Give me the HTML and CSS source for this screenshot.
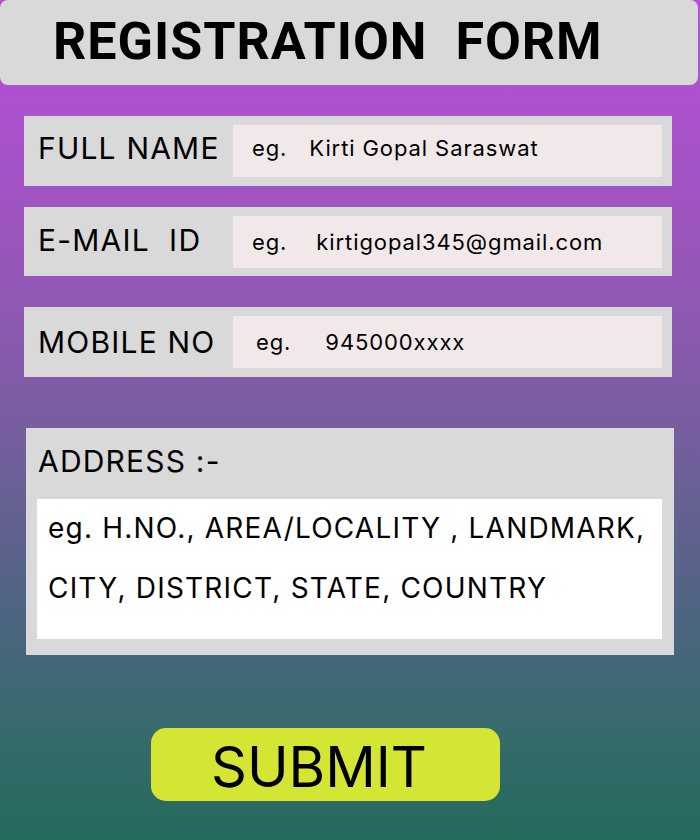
FILE: index.html
```html
<!DOCTYPE html>
<html lang="en">
<head>
<meta charset="utf-8">
<title>Registration Form</title>
<link rel="stylesheet" href="styles.css">
</head>
<body>
<div class="page">
  <header class="header">
    <h1 class="title">REGISTRATION&nbsp; FORM</h1>
  </header>
  <form class="form">
    <div class="row row-name">
      <label class="label">FULL NAME</label>
      <div class="input"><span class="eg">eg.</span><span class="val val-name">Kirti Gopal Saraswat</span></div>
    </div>
    <div class="row row-email">
      <label class="label">E-MAIL&nbsp; ID</label>
      <div class="input"><span class="eg">eg.</span><span class="val val-email">kirtigopal345@gmail.com</span></div>
    </div>
    <div class="row row-mobile">
      <label class="label">MOBILE NO</label>
      <div class="input input-mobile"><span class="eg">eg.</span><span class="val val-mobile">945000xxxx</span></div>
    </div>
    <div class="address">
      <div class="label address-label">ADDRESS :-</div>
      <div class="textarea">
        <p class="line">eg. H.NO., AREA/LOCALITY , LANDMARK,</p>
        <p class="line">CITY, DISTRICT, STATE, COUNTRY</p>
      </div>
    </div>
    <div class="actions">
      <button type="button" class="submit">SUBMIT</button>
    </div>
  </form>
</div>
</body>
</html>
```
FILE: styles.css
```css
html, body {
  margin: 0;
  padding: 0;
}
body {
  width: 700px;
  height: 840px;
  overflow: hidden;
  font-family: Inter, "Noto Sans", sans-serif;
  color: #000;
  background: linear-gradient(to bottom, #b251d2 0px, #b051d0 85px, #9158b5 300px, #775e9f 430px, #4c6580 620px, #396a6e 720px, #256a5c 840px);
}
.page {
  display: flex;
  flex-direction: column;
}
.header {
  height: 85px;
  width: 698px;
  background: #d9d9d9;
  border-radius: 8px;
  display: flex;
  align-items: center;
  box-sizing: border-box;
  padding-left: 53px;
}
.title {
  margin: 0;
  font-family: Roboto, Inter, sans-serif;
  font-weight: 700;
  font-size: 52px;
  line-height: 1;
  letter-spacing: 1px;
  padding-bottom: 2px;
}
.form {
  display: flex;
  flex-direction: column;
  padding: 31px 0 0 24px;
}
.row {
  width: 648px;
  height: 70px;
  box-sizing: border-box;
  background: #d9d9d9;
  display: flex;
  align-items: center;
  padding: 0 10px 0 14px;
}
.row-email {
  margin-top: 21px;
  height: 69px;
}
.row-mobile {
  margin-top: 31px;
}
.label {
  font-size: 30px;
  font-weight: 400;
  width: 195px;
  flex: none;
  letter-spacing: 1.2px;
}
.row-name .label { padding-bottom: 6px; }
.row-email .label { padding-bottom: 4px; }
.input {
  flex: 1;
  height: 52px;
  background: #f1e9e9;
  display: flex;
  align-items: center;
  padding-left: 19px;
  font-size: 22px;
  letter-spacing: 0.9px;
}
.row-name .input { padding-bottom: 6px; box-sizing: border-box; }
.input-mobile { padding-left: 23px; }
.val-name { margin-left: 22px; }
.val-email { margin-left: 29px; }
.val-mobile { margin-left: 34px; }
.address {
  margin-top: 51px;
  margin-left: 2px;
  width: 648px;
  height: 227px;
  box-sizing: border-box;
  background: #d9d9d9;
  padding: 15px 12px 0 11px;
  display: flex;
  flex-direction: column;
}
.address-label {
  width: auto;
  padding-left: 1px;
  line-height: 36px;
}
.textarea {
  margin-top: 20px;
  height: 140px;
  background: #ffffff;
  box-sizing: border-box;
  padding: 14px 0 0 11px;
}
.line {
  margin: 0;
  font-size: 28px;
  line-height: 30px;
  letter-spacing: 1.2px;
}
.line + .line {
  margin-top: 30px;
}
.actions {
  margin-top: 73px;
  padding-left: 127px;
}
.submit {
  width: 349px;
  height: 73px;
  border: none;
  border-radius: 15px;
  background: #d4e633;
  font-family: Inter, sans-serif;
  font-size: 56px;
  color: #000;
  padding: 6px 0 0 60px;
  text-align: left;
  line-height: 67px;
  cursor: pointer;
}
```
